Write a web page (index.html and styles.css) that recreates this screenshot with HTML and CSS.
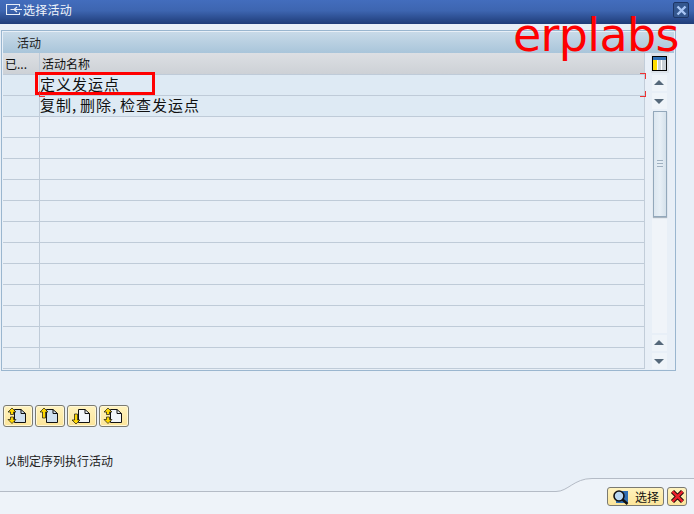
FILE: index.html
```html
<!DOCTYPE html>
<html lang="zh">
<head>
<meta charset="utf-8">
<title>选择活动</title>
<link rel="stylesheet" href="styles.css">
</head>
<body>
<div class="window">
  <header class="titlebar">
    <svg class="title-icon" width="17" height="14" viewBox="0 0 17 14"><path d="M13.500 3.500V1.500H0.500V11.500H13.500V9.500M4.500 6.500H16M11 4L8 6.500L11 9" fill="none" stroke="#e8eef8" stroke-width="1.100"/></svg>
    <span class="title-text">选择活动</span>
    <button class="close-x" aria-label="关闭"><svg width="11" height="11" viewBox="0 0 11 11"><path d="M1.500 1.500L9.500 9.500M9.500 1.500L1.500 9.500" stroke="#a9c6f5" stroke-width="2.400"/></svg></button>
  </header>

  <section class="panel">
    <div class="panel-title">活动</div>
    <div class="table-wrap">
      <div class="grid">
        <div class="row head"><div class="c1">已...</div><div class="c2">活动名称</div></div>
        <div class="row"><div class="c1"></div><div class="c2 big">定义发运点</div></div>
        <div class="row"><div class="c1"></div><div class="c2 big">复制<span class="cm">,</span>删除<span class="cm">,</span>检查发运点</div></div>
        <div class="row"><div class="c1"></div><div class="c2"></div></div>
        <div class="row"><div class="c1"></div><div class="c2"></div></div>
        <div class="row"><div class="c1"></div><div class="c2"></div></div>
        <div class="row"><div class="c1"></div><div class="c2"></div></div>
        <div class="row"><div class="c1"></div><div class="c2"></div></div>
        <div class="row"><div class="c1"></div><div class="c2"></div></div>
        <div class="row"><div class="c1"></div><div class="c2"></div></div>
        <div class="row"><div class="c1"></div><div class="c2"></div></div>
        <div class="row"><div class="c1"></div><div class="c2"></div></div>
        <div class="row"><div class="c1"></div><div class="c2"></div></div>
        <div class="row"><div class="c1"></div><div class="c2"></div></div>
        <div class="row"><div class="c1"></div><div class="c2"></div></div>
      </div>
      <aside class="scroll">
        <div class="cfg">
          <svg width="15" height="15" viewBox="0 0 15 15"><rect x="0.500" y="0.500" width="14" height="14" fill="#fff" stroke="#000"/><rect x="1" y="1" width="13" height="3" fill="#2f6fb5"/><rect x="1" y="4" width="4" height="10" fill="#ffdc00"/><rect x="6" y="4" width="3" height="10" fill="#c9d0d6"/><rect x="10" y="4" width="4" height="10" fill="#c9d0d6"/></svg>
        </div>
        <div class="sbtn up"></div>
        <div class="sbtn down"></div>
        <div class="track">
          <div class="thumb"><span class="grip"></span></div>
        </div>
        <div class="sbtn up"></div>
        <div class="sbtn down"></div>
      </aside>
    </div>
  </section>

  <div class="tools">
    <button class="tool"><svg width="22" height="18" viewBox="0 0 22 18"><path d="M7.500 2.500H14L18.500 6.500V15.500H7.500Z" fill="#cfe0f0" stroke="#111"/><path d="M14 2.500V6.500H18.500" fill="none" stroke="#111"/><path d="M5 1L9 5H6.500V7.500H3.500V5H1ZM5 16.500L9 12.500H6.500V10H3.500V12.500H1Z" fill="#ffd800" stroke="#111" stroke-width=".7"/></svg></button>
    <button class="tool"><svg width="22" height="18" viewBox="0 0 22 18"><path d="M7.500 2.500H14L18.500 6.500V15.500H7.500Z" fill="#cfe0f0" stroke="#111"/><path d="M14 2.500V6.500H18.500" fill="none" stroke="#111"/><path d="M5 1L9 5H6.500V11H3.500V5H1Z" fill="#ffd800" stroke="#111" stroke-width=".7"/></svg></button>
    <button class="tool"><svg width="22" height="18" viewBox="0 0 22 18"><path d="M7.500 2.500H14L18.500 6.500V15.500H7.500Z" fill="#f2f6fa" stroke="#111"/><path d="M14 2.500V6.500H18.500" fill="none" stroke="#111"/><path d="M5 17L9 13H6.500V7H3.500V13H1Z" fill="#ffd800" stroke="#111" stroke-width=".7"/></svg></button>
    <button class="tool"><svg width="22" height="18" viewBox="0 0 22 18"><path d="M7.500 2.500H14L18.500 6.500V15.500H7.500Z" fill="#f2f6fa" stroke="#111"/><path d="M14 2.500V6.500H18.500" fill="none" stroke="#111"/><path d="M5 1L9 5H6.500V7.500H3.500V5H1ZM5 16.500L9 12.500H6.500V10H3.500V12.500H1Z" fill="#ffd800" stroke="#111" stroke-width=".7"/></svg></button>
  </div>

  <p class="status">以制定序列执行活动</p>

  <footer class="footer">
    <svg class="curve" width="694" height="37" viewBox="0 0 694 37"><path d="M0 14.500H556C568 14.500 574 1.500 592 1.500H694V37H0Z" fill="#eef3f9"/><path d="M0 14.500H556C568 14.500 574 1.500 592 1.500H694" fill="none" stroke="#b4bbc6"/></svg>
    <div class="actions">
      <button class="act wide">
        <svg width="17" height="16" viewBox="0 0 17 16"><rect x="4" y="2" width="12" height="12" fill="#2f6fb5"/><circle cx="7" cy="7" r="5" fill="#b9d8f2" stroke="#111" stroke-width="1.600"/><path d="M10.500 10.500L15.500 15" stroke="#111" stroke-width="2.400"/></svg>
        <span>选择</span>
      </button>
      <button class="act">
        <svg width="15" height="15" viewBox="0 0 15 15"><path d="M2.500 2.500L12.500 12.500M12.500 2.500L2.500 12.500" stroke="#000" stroke-width="4.400"/><path d="M2.500 2.500L12.500 12.500M12.500 2.500L2.500 12.500" stroke="#e8212a" stroke-width="2.600"/></svg>
      </button>
    </div>
  </footer>

  <div class="redbox"></div>
  <span class="corner tr"></span>
  <span class="corner br"></span>
  <span class="corner bl"></span>
  <div class="watermark">erplabs</div>
</div>
</body>
</html>
```
FILE: styles.css
```css
* { box-sizing: border-box; }
html, body { margin: 0; padding: 0; }
body { background: #e8eff7; font-family: "Noto Sans CJK SC", "Liberation Sans", sans-serif; color: #111; }
.window { position: relative; width: 694px; height: 514px; overflow: hidden; display: flex; flex-direction: column; }

.titlebar { height: 24px; flex: none; display: flex; align-items: center; padding: 0 5px 4px 6px; background: linear-gradient(#436dbd 0%, #3d65b0 45%, #1f3c78 100%); color: #f0f4fb; }
.title-icon { flex: none; margin-right: 0; }
.title-text { font-size: 12px; line-height: 20px; letter-spacing: 0.25px; }
.close-x { margin-left: auto; width: 16px; height: 16px; padding: 0; display: flex; align-items: center; justify-content: center; background: #34578f; border: 1px solid #1d3666; border-radius: 2px; }

.panel { margin: 6px 0 0 1px; width: 675px; height: 341px; flex: none; border: 1px solid #9ab6cf; padding: 1px; display: flex; flex-direction: column; background: #e8eff7; }
.panel-title { height: 21px; flex: none; font-size: 12px; line-height: 21px; padding-left: 14px; background: linear-gradient(#c8dae8, #a9c5da); color: #222; }
.table-wrap { display: flex; flex: 1; min-height: 0; }
.grid { width: 642px; flex: none; border-right: 1px solid #c2cdd9; }
.row { display: flex; height: 21px; border-bottom: 1px solid #bfcbd8; background: #deeaf4; }
.row:nth-child(n+4) { background: #e8eff7; }
.row.head { height: 22px; background: linear-gradient(#dcdfe3, #cdd1d6); }
.c1 { width: 37px; flex: none; border-right: 1px solid #bfcbd8; font-size: 12px; line-height: 21px; padding-left: 2px; }
.c2 { flex: 1; font-size: 12px; line-height: 21px; padding-left: 2px; }
.big { font-size: 15px; letter-spacing: 1px; line-height: 18px; padding-left: 0; }
.cm { display: inline-block; width: 8px; letter-spacing: 0; }

.scroll { width: 29px; flex: none; display: flex; flex-direction: column; align-items: center; }
.cfg { width: 18px; height: 20px; flex: none; display: flex; align-items: center; justify-content: center; background: #dde3ea; margin-bottom: 2px; }
.sbtn { width: 15px; height: 16px; background: #eff4f9; position: relative; margin-bottom: 2px; flex: none; }
.sbtn:last-child { margin-bottom: 0; }
.sbtn::after { content: ""; position: absolute; left: 2px; border-left: 5px solid transparent; border-right: 5px solid transparent; }
.sbtn.up::after { top: 5px; border-bottom: 5px solid #55687a; }
.sbtn.down::after { top: 6px; border-top: 5px solid #55687a; }
.track { flex: 1; width: 15px; background: #f0f4f9; margin-bottom: 2px; }
.thumb { width: 14px; height: 106px; margin: 0 auto; background: linear-gradient(90deg, #dce7f0, #e7eff6 50%, #d5e1eb); border: 1px solid #93a8bb; box-shadow: 0 1px 1px #a9b5c1; display: flex; align-items: center; justify-content: center; }
.grip { width: 6px; height: 8px; background: repeating-linear-gradient(#9fb0c0 0 1px, transparent 1px 3px); }

.tools { display: flex; gap: 2px; margin: 34px 0 0 3px; flex: none; }
.tool { width: 30px; height: 22px; padding: 0; display: flex; align-items: center; justify-content: center; background: linear-gradient(#fff3bf, #fce59a); border: 1px solid #7a7a72; border-radius: 3px; box-shadow: inset 0 0 0 1px #fff8d8; }

.status { margin: 26px 0 0 5px; font-size: 12px; line-height: 16px; color: #222; flex: none; }

.footer { position: relative; flex: 1; display: flex; justify-content: flex-end; align-items: flex-end; padding: 0 7px 8px 0; }
.curve { position: absolute; left: 0; bottom: 0; }
.actions { position: relative; display: flex; gap: 3px; }
.act { height: 19px; width: 20px; padding: 0; display: flex; align-items: center; justify-content: center; background: linear-gradient(#fff3bf, #fce59a); border: 1px solid #7a7a72; border-radius: 3px; font: inherit; }
.act.wide { width: 57px; gap: 6px; font-size: 12px; color: #111; }

.redbox { position: absolute; left: 35px; top: 72px; width: 120px; height: 23px; border: 3px solid #f00; }
.corner { position: absolute; width: 6px; height: 6px; border: 0 solid #e33; }
.tr { left: 640px; top: 73px; border-width: 1px 1px 0 0; }
.br { left: 640px; top: 91px; border-width: 0 1px 1px 0; }
.bl { left: 39px; top: 91px; border-width: 0 0 1px 1px; }
.watermark { position: absolute; left: 513px; top: 5px; font-family: "DejaVu Sans", sans-serif; font-size: 46px; line-height: 60px; color: #f00; letter-spacing: -0.7px; }
```
